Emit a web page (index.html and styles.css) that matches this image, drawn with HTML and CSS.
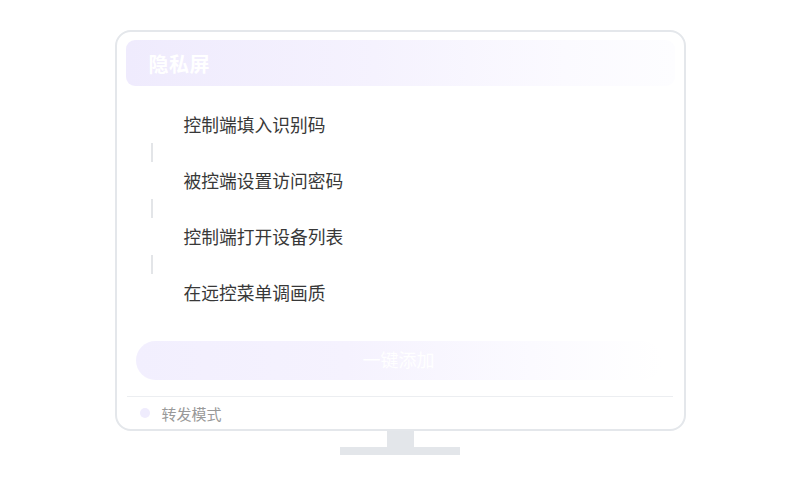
FILE: index.html
```html
<!DOCTYPE html>
<html lang="zh">
<head>
<meta charset="utf-8">
<link rel="stylesheet" href="styles.css">
</head>
<body>
<div class="page">
  <div class="monitor">
    <div class="screen">
      <div class="header"><span class="title">隐私屏</span></div>
      <div class="steps">
        <div class="step">控制端填入识别码</div>
        <div class="connector"><span class="line"></span></div>
        <div class="step">被控端设置访问密码</div>
        <div class="connector"><span class="line"></span></div>
        <div class="step">控制端打开设备列表</div>
        <div class="connector"><span class="line"></span></div>
        <div class="step">在远控菜单调画质</div>
      </div>
      <div class="btn">一键添加</div>
      <div class="divider"></div>
      <div class="footer"><span class="dot"></span><span class="mode">转发模式</span></div>
    </div>
    <div class="neck"></div>
    <div class="base"></div>
  </div>
</div>
</body>
</html>
```
FILE: styles.css
```css
html, body {
  margin: 0;
  padding: 0;
  background: #ffffff;
  font-family: "Noto Sans CJK SC", "Noto Sans", sans-serif;
}
.page {
  width: 800px;
  height: 500px;
  display: flex;
  justify-content: center;
  padding-top: 30px;
  box-sizing: border-box;
}
.monitor {
  display: flex;
  flex-direction: column;
  align-items: center;
}
.screen {
  width: 567px;
  height: 397px;
  border: 2px solid #e4e7eb;
  border-radius: 16px;
  box-sizing: content-box;
  display: flex;
  flex-direction: column;
  padding: 0;
}
.header {
  margin: 8px 9px 0 9px;
  height: 46px;
  border-radius: 9px;
  background: linear-gradient(90deg, #efebfd 0%, #f5f2fe 45%, #fbfaff 80%, #fdfdff 100%);
  display: flex;
  align-items: center;
  padding-left: 23px;
}
.title {
  color: #ffffff;
  font-size: 20px;
  font-weight: 700;
  letter-spacing: 0.5px;
}
.steps {
  margin-top: 20px;
  display: flex;
  flex-direction: column;
}
.step {
  height: 37px;
  line-height: 37px;
  padding-left: 67px;
  font-size: 17.75px;
  color: #383838;
}
.connector {
  height: 19px;
  padding-left: 34px;
  display: flex;
}
.line {
  width: 2px;
  height: 19px;
  background: #e3e5e8;
}
.btn {
  margin: 30px 0 0 19px;
  width: 526px;
  height: 39px;
  box-sizing: border-box;
  padding-bottom: 4px;
  border-radius: 20px;
  background: linear-gradient(90deg, #f2effe 0%, #f5f2fe 40%, #fbfaff 75%, #ffffff 100%);
  color: #ffffff;
  font-size: 18px;
  display: flex;
  align-items: center;
  justify-content: center;
}
.divider {
  margin: 16px 11px 0 10px;
  height: 1px;
  background: #eceef1;
}
.footer {
  display: flex;
  align-items: center;
  height: 32px;
  padding-left: 23px;
}
.dot {
  width: 10px;
  height: 10px;
  border-radius: 50%;
  background: #efecfd;
}
.mode {
  margin-left: 12px;
  font-size: 15px;
  color: #999999;
}
.neck {
  width: 27px;
  height: 16px;
  background: #e3e6ea;
}
.base {
  width: 120px;
  height: 8px;
  background: #e3e6ea;
}
```
